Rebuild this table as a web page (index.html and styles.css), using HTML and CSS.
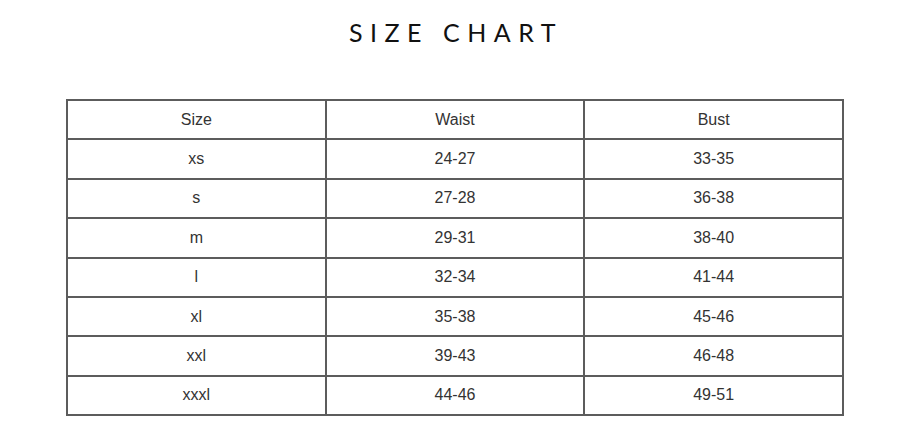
FILE: index.html
```html
<!DOCTYPE html>
<html>
<head>
<meta charset="utf-8">
<link rel="stylesheet" href="styles.css">
</head>
<body>
<div class="page">
  <h1 class="title">SIZE CHART</h1>
  <table class="chart">
    <tr><td>Size</td><td>Waist</td><td>Bust</td></tr>
    <tr><td>xs</td><td>24-27</td><td>33-35</td></tr>
    <tr><td>s</td><td>27-28</td><td>36-38</td></tr>
    <tr><td>m</td><td>29-31</td><td>38-40</td></tr>
    <tr><td>l</td><td>32-34</td><td>41-44</td></tr>
    <tr><td>xl</td><td>35-38</td><td>45-46</td></tr>
    <tr><td>xxl</td><td>39-43</td><td>46-48</td></tr>
    <tr><td>xxxl</td><td>44-46</td><td>49-51</td></tr>
  </table>
</div>
</body>
</html>
```

FILE: styles.css
```css
html, body {
  margin: 0;
  padding: 0;
  background: #ffffff;
}
.page {
  width: 920px;
  height: 431px;
  display: flex;
  flex-direction: column;
  align-items: flex-start;
}
.title {
  align-self: stretch;
  margin: 17px 0 0 0;
  padding-right: 8px;
  text-align: center;
  font-family: "Lato", "Liberation Sans", sans-serif;
  font-weight: 400;
  font-size: 25px;
  line-height: 30px;
  letter-spacing: 7.5px;
  color: #111;
}
.chart {
  margin: 52px 0 0 66px;
  width: 778px;
  table-layout: fixed;
  border-collapse: collapse;
  border: 2px solid #5c5c5c;
  font-family: "Liberation Sans", Arial, sans-serif;
  font-size: 16px;
  color: #333;
}
.chart td {
  border: 2px solid #5c5c5c;
  height: 37.4px;
  padding: 0;
  text-align: center;
  vertical-align: middle;
}
```
